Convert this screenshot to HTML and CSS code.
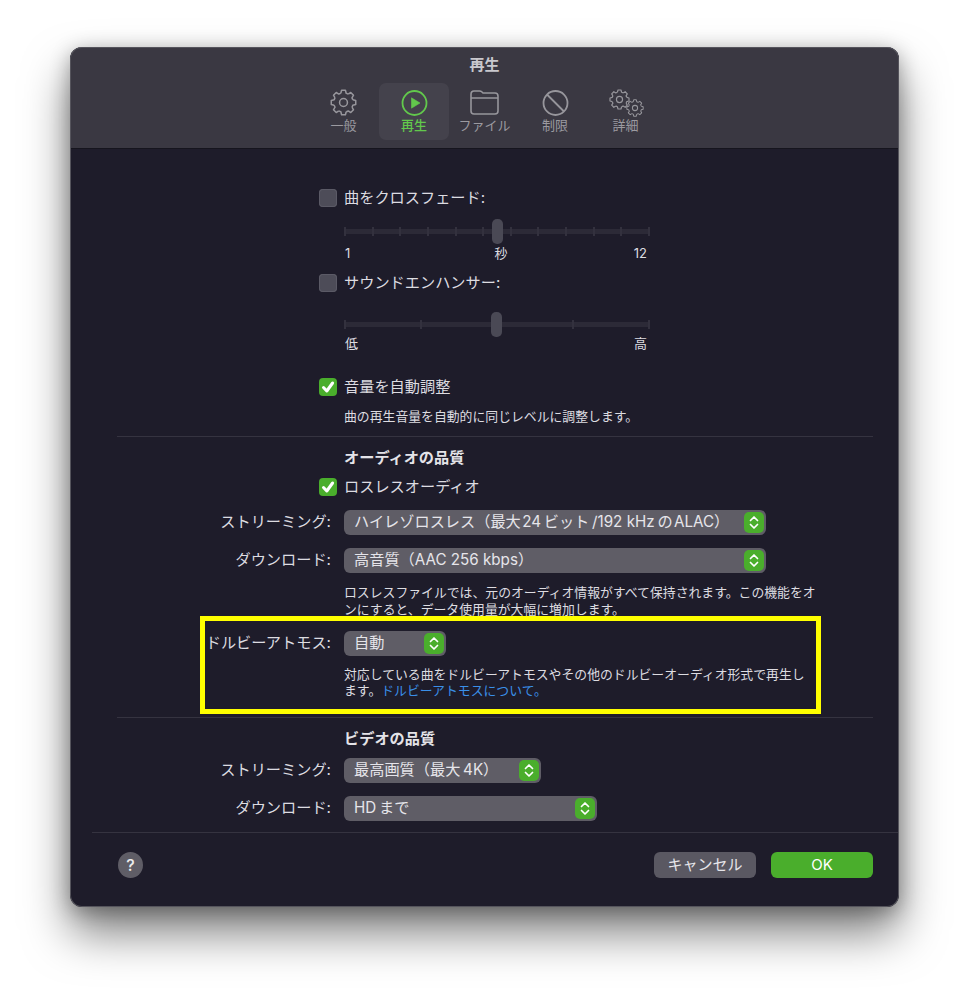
FILE: index.html
```html
<!DOCTYPE html>
<html lang="ja">
<head>
<meta charset="utf-8">
<title>再生</title>
<link rel="stylesheet" href="styles.css">
</head>
<body>
<svg class="defs" width="0" height="0" aria-hidden="true">
  <symbol id="gear" viewBox="-12 -12 24 24">
    <g fill="none" stroke="currentColor" stroke-width="1.350" stroke-linejoin="round">
      <path id="tooth" d="M-2.370-8.270L-1.720-10.870H1.720L2.370-8.270A8.600 8.600 0 0 1 4.170-7.520"/>
      <use href="#tooth" transform="rotate(45)"/>
      <use href="#tooth" transform="rotate(90)"/>
      <use href="#tooth" transform="rotate(135)"/>
      <use href="#tooth" transform="rotate(180)"/>
      <use href="#tooth" transform="rotate(225)"/>
      <use href="#tooth" transform="rotate(270)"/>
      <use href="#tooth" transform="rotate(315)"/>
      <circle r="3.500"/>
    </g>
  </symbol>
  <symbol id="stepper" viewBox="0 0 20 20">
    <path d="M6.500 8 10 4.500 13.500 8M6.500 12 10 15.500 13.500 12" fill="none" stroke="#fff" stroke-width="1.700" stroke-linecap="round" stroke-linejoin="round"/>
  </symbol>
  <symbol id="tick" viewBox="0 0 18 18">
    <path d="M4.500 9.500 7.800 13 13.600 5" fill="none" stroke="#fff" stroke-width="3" stroke-linecap="round" stroke-linejoin="round"/>
  </symbol>
</svg>
<main class="window">
  <header class="titlebar">
    <h1 class="title">再生</h1>
    <nav class="tabs">
      <div class="tab">
        <svg class="tab-icon" width="27" height="27"><use href="#gear"/></svg>
        <span>一般</span>
      </div>
      <div class="tab tab-active">
        <svg class="tab-icon" width="27" height="27" viewBox="0 0 27 27">
          <circle cx="13.500" cy="14" r="12" fill="none" stroke="currentColor" stroke-width="1.800"/>
          <path d="M10.500 8.800 19 14 10.500 19.200Z" fill="currentColor" stroke="currentColor" stroke-width=".6" stroke-linejoin="round"/>
        </svg>
        <span>再生</span>
      </div>
      <div class="tab">
        <svg class="tab-icon" width="29" height="27" viewBox="0 0 29 27">
          <path d="M1 5.500Q1 2 4 2H9.500Q11 2 12 3L13 4H25Q28 4 28 7V22Q28 25 25 25H4Q1 25 1 22Z" fill="none" stroke="currentColor" stroke-width="1.600"/>
          <path d="M1 9H28" fill="none" stroke="currentColor" stroke-width="1.600"/>
        </svg>
        <span>ファイル</span>
      </div>
      <div class="tab">
        <svg class="tab-icon" width="27" height="27" viewBox="0 0 27 27">
          <circle cx="13.500" cy="14" r="12" fill="none" stroke="currentColor" stroke-width="1.800"/>
          <path d="M5 5.500 22 22.500" fill="none" stroke="currentColor" stroke-width="1.800"/>
        </svg>
        <span>制限</span>
      </div>
      <div class="tab">
        <span class="gears">
          <svg class="gear-big" width="21" height="21"><use href="#gear"/></svg>
          <svg class="gear-small" width="18" height="18"><use href="#gear"/></svg>
        </span>
        <span>詳細</span>
      </div>
    </nav>
  </header>

  <section class="content">
    <div class="row row-crossfade">
      <div class="label-cell"><span class="check"></span></div>
      <div class="check-label">曲をクロスフェード:</div>
    </div>
    <div class="slider-block slider-a">
      <div class="slider">
        <div class="ticks">
          <i></i><i></i><i></i><i></i><i></i><i></i><i></i><i></i><i></i><i></i><i></i><i></i>
        </div>
        <span class="thumb thumb-a"></span>
      </div>
      <div class="slider-labels"><span>1</span><span class="mid-label">秒</span><span>12</span></div>
    </div>

    <div class="row row-enhancer">
      <div class="label-cell"><span class="check"></span></div>
      <div class="check-label">サウンドエンハンサー:</div>
    </div>
    <div class="slider-block slider-b">
      <div class="slider">
        <div class="ticks">
          <i></i><i></i><i></i><i></i><i></i>
        </div>
        <span class="thumb thumb-b"></span>
      </div>
      <div class="slider-labels slider-labels-tight"><span>低</span><span>高</span></div>
    </div>

    <div class="row row-volume">
      <div class="label-cell"><span class="check check-on"><svg class="tick"><use href="#tick"/></svg></span></div>
      <div class="check-label">音量を自動調整</div>
    </div>
    <p class="note note-volume">曲の再生音量を自動的に同じレベルに調整します。</p>

    <hr class="divider divider-a">
    <h2 class="heading heading-audio">オーディオの品質</h2>
    <div class="row row-lossless">
      <div class="label-cell"><span class="check check-on"><svg class="tick"><use href="#tick"/></svg></span></div>
      <div class="check-label">ロスレスオーディオ</div>
    </div>
    <div class="row row-select row-stream">
      <div class="label-cell">ストリーミング:</div>
      <div class="select select-wide"><span>ハイレゾロスレス（最大&#8202;24&#8201;ビット&#8201;/192 kHz&#8201;の&#8202;ALAC）</span><svg class="stepper"><use href="#stepper"/></svg></div>
    </div>
    <div class="row row-select row-down">
      <div class="label-cell">ダウンロード:</div>
      <div class="select select-wide"><span>高音質（AAC 256 kbps）</span><svg class="stepper"><use href="#stepper"/></svg></div>
    </div>
    <p class="note note-lossless">ロスレスファイルでは、元のオーディオ情報がすべて保持されます。この機能をオ<br>ンにすると、データ使用量が大幅に増加します。</p>
    <div class="row row-select row-dolby">
      <div class="label-cell">ドルビーアトモス:</div>
      <div class="select select-dolby"><span>自動</span><svg class="stepper"><use href="#stepper"/></svg></div>
    </div>
    <p class="note note-dolby">対応している曲をドルビーアトモスやその他のドルビーオーディオ形式で再生し<br>ます。<a class="link">ドルビーアトモスについて。</a></p>

    <hr class="divider divider-b">
    <h2 class="heading heading-video">ビデオの品質</h2>
    <div class="row row-select row-vstream">
      <div class="label-cell">ストリーミング:</div>
      <div class="select select-video"><span>最高画質（最大&#8201;4K）</span><svg class="stepper"><use href="#stepper"/></svg></div>
    </div>
    <div class="row row-select row-vdown">
      <div class="label-cell">ダウンロード:</div>
      <div class="select select-hd"><span>HD&#8201;まで</span><svg class="stepper"><use href="#stepper"/></svg></div>
    </div>
    <hr class="divider-foot">
    <footer class="footer">
      <span class="help">?</span>
      <span class="buttons">
        <span class="btn btn-cancel">キャンセル</span>
        <span class="btn btn-ok">OK</span>
      </span>
    </footer>
  </section>
</main>
<div class="highlight"></div>
</body>
</html>
```

FILE: styles.css
```css
* { box-sizing: border-box; }

html, body {
  margin: 0;
  background: #fff;
}

body {
  height: 1000px;
  overflow: hidden;
  padding: 47px 0 0 70px;
  font-family: "Inter", "Noto Sans CJK JP", sans-serif;
  font-size: 15.2px;
  color: #dddce1;
  text-spacing-trim: space-all;
}

.defs { position: absolute; }

.window {
  position: relative;
  width: 829px;
  height: 860px;
  border-radius: 12px;
  overflow: hidden;
  background: #1e1c2a;
  box-shadow: 0 26px 46px rgba(0, 0, 0, .5), 0 4px 20px rgba(0, 0, 0, .3);
}

.window::after {
  content: "";
  position: absolute;
  inset: 0;
  border-radius: 12px;
  box-shadow: inset 0 0 0 1px #55545c;
  pointer-events: none;
}

.titlebar {
  height: 102px;
  background: #3a3842;
  border-top: 1px solid #75747c;
  border-bottom: 1px solid #16151e;
}

.title {
  margin: 0;
  padding-top: 7px;
  height: 26px;
  line-height: 20px;
  text-align: center;
  font-size: 15px;
  font-weight: 700;
  color: #c9c8cd;
}

.tabs {
  display: flex;
  justify-content: center;
  padding-top: 9px;
}

.tab {
  width: 70.5px;
  height: 57px;
  padding-top: 6px;
  border-radius: 7px;
  display: flex;
  flex-direction: column;
  align-items: center;
  gap: 1px;
  font-size: 13px;
  line-height: 16px;
  color: #9b9aa0;
}

.tab-active {
  background: #44424c;
  color: #62c84c;
  font-weight: 500;
}

.tab-icon {
  display: block;
  height: 27px;
  color: #97969c;
}

.tab-active .tab-icon { color: #62c84c; }

.gears {
  position: relative;
  display: block;
  width: 34px;
  height: 27px;
  color: #97969c;
}

.gear-big {
  position: absolute;
  left: 0;
  top: 0;
}

.gear-small {
  position: absolute;
  left: 17px;
  top: 10px;
}

.content { height: 757px; }

.row {
  display: grid;
  grid-template-columns: 261px 1fr;
  column-gap: 13px;
  align-items: center;
}

.label-cell {
  display: flex;
  justify-content: flex-end;
  white-space: nowrap;
  line-height: 18px;
}

.check-label { line-height: 18px; }

.check {
  display: block;
  width: 18px;
  height: 18px;
  margin-right: -6px;
  border-radius: 4px;
  background: #4d4c58;
  box-shadow: inset 0 0 0 1px #5b5a66;
}

.check-on {
  background: #4aae2c;
  box-shadow: none;
}

.tick {
  display: block;
  width: 18px;
  height: 18px;
}

.row-crossfade { margin-top: 40px; height: 18px; }
.row-enhancer { margin-top: 13px; height: 18px; }
.row-volume { margin-top: 27px; height: 18px; }
.row-lossless { margin-top: 11px; height: 18px; }

.slider-block {
  width: 306px;
  margin-left: 274px;
}

.slider-a { margin-top: 12px; }
.slider-b { margin-top: 20px; }

.slider {
  position: relative;
  height: 25px;
  display: flex;
  align-items: center;
}

.ticks {
  flex: 1;
  height: 9px;
  display: flex;
  justify-content: space-between;
  background: linear-gradient(#2c2a37, #2c2a37) center / 100% 5px no-repeat;
}

.ticks i {
  width: 2px;
  background: #33313e;
}

.thumb {
  position: absolute;
  top: 0;
  width: 11px;
  height: 25px;
  border-radius: 5px;
  background: #4a4955;
}

.thumb-a { left: 148px; }
.thumb-b { left: 147px; }

.slider-labels {
  margin-top: 1px;
  display: flex;
  justify-content: space-between;
  padding: 0 3px 0 1px;
  font-size: 13px;
  line-height: 16px;
}

.mid-label { margin-left: 18px; }

.slider-labels-tight { margin-top: -2px; }

.note {
  margin: 0 0 0 274px;
  font-size: 12.85px;
  line-height: 16px;
  white-space: nowrap;
}

.note-volume { margin-top: 13px; }
.note-lossless { margin-top: 11px; line-height: 17px; }
.note-dolby { margin-top: 11px; }

.link { color: #3a8fe8; }

.divider {
  margin: 0 26px 0 47px;
  border: 0;
  height: 1px;
  background: #353340;
}

.divider-a { margin-top: 11px; }
.divider-b { margin-top: 18px; }

.divider-foot {
  margin: 11px 0 0 22px;
  border: 0;
  height: 1px;
  background: #353340;
}

.heading {
  margin: 0 0 0 274px;
  font-size: 15.2px;
  font-weight: 700;
  line-height: 18px;
  color: #e4e3e8;
}

.heading-audio { margin-top: 12px; }
.heading-video { margin-top: 12px; }

.row-select { height: 25px; }
.row-select .label-cell { padding-bottom: 2px; }
.row-stream { margin-top: 14px; }
.row-down { margin-top: 13px; }
.row-dolby { margin-top: 13px; }
.row-vstream { margin-top: 10px; }
.row-vdown { margin-top: 13px; }

.select {
  height: 25px;
  padding: 0 2px 0 10px;
  border-radius: 6px;
  background: #5f5d66;
  display: flex;
  align-items: center;
  justify-content: space-between;
  white-space: nowrap;
  line-height: 23px;
  color: #e6e5ea;
}

.select span { margin-top: -2px; }

.select-wide { width: 422px; }
.select-dolby { width: 102px; }
.select-video { width: 197px; }
.select-hd { width: 253px; }

.stepper {
  width: 20px;
  height: 21px;
  border-radius: 5px;
  background: #4aae2c;
}

.footer {
  display: flex;
  justify-content: space-between;
  align-items: center;
  padding: 19px 26px 0 48px;
}

.help {
  width: 25px;
  height: 26px;
  border-radius: 50%;
  background: #5f5d66;
  color: #eee;
  font-size: 16px;
  font-weight: 500;
  line-height: 26px;
  text-align: center;
}

.buttons {
  display: flex;
  gap: 15px;
}

.btn {
  width: 102px;
  height: 26px;
  border-radius: 6px;
  font-size: 15px;
  line-height: 26px;
  text-align: center;
}

.btn-cancel { background: #5a5862; color: #e6e5ea; }
.btn-ok { background: #4aae2c; color: #fff; }

.highlight {
  position: absolute;
  left: 200px;
  top: 616px;
  width: 621px;
  height: 98px;
  border: 5px solid #ffff00;
}
```
